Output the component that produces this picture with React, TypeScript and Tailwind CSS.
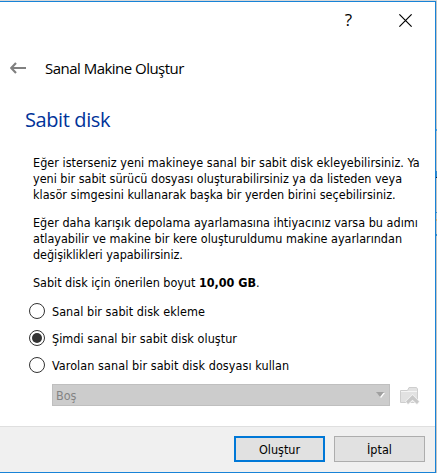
import React from "react";

const body = "font-['DejaVu_Sans_Condensed','DejaVu_Sans',sans-serif] [font-stretch:condensed]";
const segoe = "font-['Open_Sans','Noto_Sans',sans-serif] [font-stretch:normal]";

function Radio({ label, checked, tracking }: { label: string; checked?: boolean; tracking: string }) {
  return (
    <label className="flex h-[27px] items-center">
      <span className="flex size-4 items-center justify-center rounded-full border border-[#333] bg-white">
        {checked && <span className="size-[10px] rounded-full bg-[#333]" />}
      </span>
      <span className={`ml-[7px] whitespace-nowrap pt-[2px] ${tracking}`}>{label}</span>
    </label>
  );
}

export default function App() {
  return (
    <div className={`flex h-[473px] w-[437px] flex-col overflow-hidden bg-[#d8d8d8] pt-px text-[12.5px] leading-4 text-black ${body}`}>
      <div className="flex min-h-0 flex-1">
        <div className="flex w-[436px] flex-col border-y border-r border-[#1883d7] bg-white">
          <div className="flex h-[37px] items-center justify-end pr-6">
            <span className={`mr-[47px] -mt-[2px] text-[17px] ${segoe}`}>?</span>
            <svg width="13" height="13" viewBox="0 0 12 12" stroke="#000" strokeWidth="1.1" className="-mr-px">
              <path d="M.3.3l11.4 11.4M11.7.3L.3 11.7" />
            </svg>
          </div>
          <div className="mt-[17px] flex h-6 items-center pl-[10px]">
            <svg width="16" height="12" viewBox="0 0 16 12" fill="none" stroke="#808080" strokeWidth="2.2">
              <path d="M1 6H16M6 1L1.2 6L6 11" />
            </svg>
            <h1 className={`ml-[19px] whitespace-nowrap text-[15px] tracking-[-0.52px] ${segoe}`}>Sanal Makine Oluştur</h1>
          </div>
          <h2 className={`mt-[26px] h-7 pl-[25px] text-[20px] leading-7 tracking-[-0.4px] text-[#003399] ${segoe}`}>Sabit disk</h2>
          <div className="mt-[21px] space-y-3 whitespace-nowrap pl-[33px]">
            <p>
              <span className="block tracking-[0.03px]">Eğer isterseniz yeni makineye sanal bir sabit disk ekleyebilirsiniz. Ya</span>
              <span className="block tracking-[-0.02px]">yeni bir sabit sürücü dosyası oluşturabilirsiniz ya da listeden veya</span>
              <span className="block tracking-[0.015px]">klasör simgesini kullanarak başka bir yerden birini seçebilirsiniz.</span>
            </p>
            <p>
              <span className="block tracking-[0.015px]">Eğer daha karışık depolama ayarlamasına ihtiyacınız varsa bu adımı</span>
              <span className="block tracking-[-0.01px]">atlayabilir ve makine bir kere oluşturuldumu makine ayarlarından</span>
              <span className="block tracking-[-0.05px]">değişiklikleri yapabilirsiniz.</span>
            </p>
            <p className="tracking-[-0.03px]">
              Sabit disk için önerilen boyut <b>10,00 GB</b>.
            </p>
          </div>
          <div className="mt-[6.5px] pl-[29px]">
            <Radio label="Sanal bir sabit disk ekleme" tracking="tracking-[0.04px]" />
            <Radio label="Şimdi sanal bir sabit disk oluştur" checked tracking="tracking-[0.05px]" />
            <Radio label="Varolan sanal bir sabit disk dosyası kullan" tracking="tracking-[0.07px]" />
          </div>
          <div className="mt-[5.5px] flex h-[22px] items-center pl-[52px]">
            <div className="flex h-[22px] w-[338px] items-center justify-between border border-[#bfbfbf] bg-[#ccc] pl-[3px] pr-1 text-[#838383]">
              <span className="pt-px">Boş</span>
              <svg width="9" height="6" viewBox="0 0 9 6">
                <path d="M1 1H9L5 6z" fill="#fff" />
                <path d="M0 0H8L4 5z" fill="#a0a0a0" />
              </svg>
            </div>
            <svg className="ml-[10px] mt-[2px]" width="20" height="18" viewBox="0 0 20 18">
              <path d="M.5 15.5V3.5H7.5L9 .5H16.5L17.5 2V15.5z" fill="#e2e2e2" stroke="#cecece" />
              <path d="M1 4.5H17" stroke="#f5f5f5" />
              <path d="M5 14.5L12.5 7L20 14.5L17 18L12.5 14L8 18z" fill="#f4f4f4" />
              <path d="M6 14.5L12.5 8L19 14.5L17 17L12.5 12.8L8 17z" fill="#c8c8c8" />
            </svg>
          </div>
          <div className="mt-5 flex flex-1 justify-end gap-[9px] border-t border-[#dfdfdf] bg-[#f0f0f0] pr-[10px] pt-[9px]">
            <button className="h-[26px] w-[91px] border-2 border-[#0078d7] bg-[#e1e1e1] pt-[2px]">Oluştur</button>
            <button className="h-[26px] w-[91px] border border-[#adadad] bg-[#e1e1e1] pt-[2px]">İptal</button>
          </div>
        </div>
        <div className="flex w-px flex-col bg-[#c5c5c5]">
          <span className="mt-[128px] h-[2px] bg-[#4a9fe0]" />
          <span className="mt-[40px] h-[6px] bg-[#3a8ac8]" />
          <span className="h-px bg-[#102040]" />
          <span className="mt-[34px] h-px bg-[#3a8ac8]" />
          <span className="mt-[6px] h-[2px] bg-[#d8b078]" />
          <span className="mt-[13px] h-[2px] bg-[#3a8ac8]" />
        </div>
      </div>
    </div>
  );
}
